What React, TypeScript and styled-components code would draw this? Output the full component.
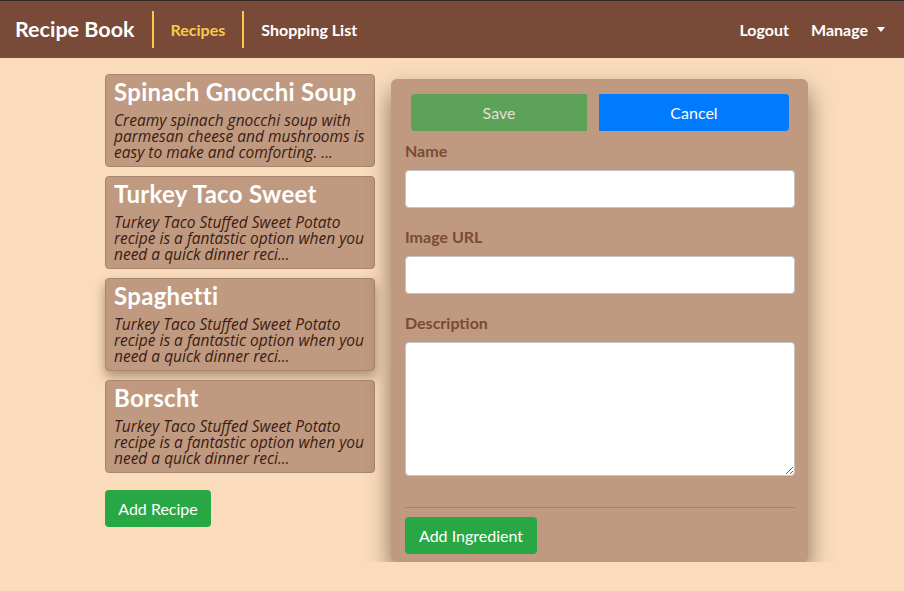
import styled, { createGlobalStyle } from 'styled-components';

const GlobalStyle = createGlobalStyle`
  html, body {
    margin: 0;
    padding: 0;
    background: #fadcbd;
    font-family: Lato, 'Noto Sans', sans-serif;
  }
  * {
    box-sizing: border-box;
  }
`;

const Navbar = styled.nav`
  display: flex;
  align-items: center;
  height: 58px;
  padding: 0 19px 0 15px;
  background: #794a38;
  border-top: 1px solid #2e2a28;
`;

const Brand = styled.span`
  color: #fff;
  font-size: 21.5px;
  font-weight: 700;
  padding-right: 17px;
  border-right: 2px solid #f7ca4a;
  line-height: 37px;
`;

interface NavLinkProps {
  $active?: boolean;
  $divider?: boolean;
}

const NavLink = styled.span<NavLinkProps>`
  color: ${(p) => (p.$active ? '#f7ca4a' : '#fff')};
  font-size: 16px;
  font-weight: 700;
  line-height: 37px;
  padding: 0 17px;
  border-right: ${(p) => (p.$divider ? '2px solid #f7ca4a' : 'none')};
`;

const NavSpacer = styled.div`
  flex: 1;
`;

const RightLink = styled.span`
  color: #fff;
  font-size: 16px;
  font-weight: 700;
  margin-left: 22px;
  display: flex;
  align-items: center;
`;

const Caret = styled.span`
  display: inline-block;
  margin-left: 9px;
  border-top: 5px solid #fff;
  border-left: 4px solid transparent;
  border-right: 4px solid transparent;
`;

const Page = styled.main`
  display: flex;
  align-items: flex-start;
  gap: 16px;
  padding: 16px 0 0 105px;
`;

const RecipeColumn = styled.div`
  width: 270px;
  display: flex;
  flex-direction: column;
  gap: 9px;
`;

const RecipeCard = styled.div<{ $raised?: boolean }>`
  background: #bf9a80;
  border: 1px solid #a8856e;
  border-radius: 4px;
  padding: 2px 6px 6px 8px;
  box-shadow: ${(p) => (p.$raised ? '0 6px 12px rgba(60, 30, 10, 0.4)' : 'none')};
`;

const RecipeTitle = styled.h4`
  margin: 0 0 5px 0;
  color: #fff;
  font-size: 24px;
  font-weight: 700;
  letter-spacing: 0.3px;
  line-height: 30px;
  white-space: nowrap;
`;

const RecipeText = styled.p`
  margin: 0;
  color: #3d1a12;
  font-family: 'Open Sans', sans-serif;
  font-size: 15.5px;
  font-style: italic;
  line-height: 16px;
`;

const Button = styled.button<{ $color: string }>`
  font-family: inherit;
  font-size: 16px;
  color: #fff;
  background: ${(p) => p.$color};
  border: none;
  border-radius: 4px;
  height: 37px;
  padding: 0 13px;
  cursor: pointer;
`;

const AddRecipe = styled(Button)`
  align-self: flex-start;
  margin-top: 8px;
  width: 106px;
`;

const AddIngredient = styled(Button)`
  width: 132px;
`;

const EditPanel = styled.div`
  width: 417px;
  margin-top: 5px;
  background: #bf9a80;
  border-radius: 6px;
  padding: 15px 13px 8px 14px;
  box-shadow: 0 12px 24px rgba(40, 20, 5, 0.55);
`;

const ActionRow = styled.div`
  display: grid;
  grid-template-columns: 176px 190px;
  gap: 12px;
  margin-left: 6px;
  margin-bottom: 8px;
`;

const SaveButton = styled(Button)`
  opacity: 0.65;
  border-radius: 4px 0 0 4px;
`;

const CancelButton = styled(Button)`
  border-radius: 0 4px 4px 0;
`;

const FormGroup = styled.div`
  display: flex;
  flex-direction: column;
  margin-bottom: 17px;
`;

const Label = styled.label`
  color: #7a4a38;
  font-size: 16px;
  font-weight: 700;
  line-height: 23px;
  margin-bottom: 8px;
`;

const Input = styled.input`
  height: 38px;
  border: 1px solid #c8c4c4;
  border-radius: 4px;
  background: #fff;
  font-family: inherit;
`;

const TextArea = styled.textarea`
  height: 134px;
  border: 1px solid #c8c4c4;
  border-radius: 4px;
  background: #fff;
  font-family: inherit;
`;

const Divider = styled.hr`
  margin: 31px 0 9px 0;
  border: none;
  border-top: 1px solid #a6836d;
`;

const recipes = [
  {
    name: 'Spinach Gnocchi Soup',
    text: 'Creamy spinach gnocchi soup with parmesan cheese and mushrooms is easy to make and comforting. ...',
  },
  {
    name: 'Turkey Taco Sweet',
    text: 'Turkey Taco Stuffed Sweet Potato recipe is a fantastic option when you need a quick dinner reci...',
  },
  {
    name: 'Spaghetti',
    text: 'Turkey Taco Stuffed Sweet Potato recipe is a fantastic option when you need a quick dinner reci...',
  },
  {
    name: 'Borscht',
    text: 'Turkey Taco Stuffed Sweet Potato recipe is a fantastic option when you need a quick dinner reci...',
  },
];

const App = () => {
  return (
    <>
      <GlobalStyle />
      <Navbar>
        <Brand>Recipe Book</Brand>
        <NavLink $active $divider>
          Recipes
        </NavLink>
        <NavLink>Shopping List</NavLink>
        <NavSpacer />
        <RightLink>Logout</RightLink>
        <RightLink>
          Manage
          <Caret />
        </RightLink>
      </Navbar>
      <Page>
        <RecipeColumn>
          {recipes.map((recipe, i) => (
            <RecipeCard key={recipe.name} $raised={i === 2}>
              <RecipeTitle>{recipe.name}</RecipeTitle>
              <RecipeText>{recipe.text}</RecipeText>
            </RecipeCard>
          ))}
          <AddRecipe $color="#28a745">Add Recipe</AddRecipe>
        </RecipeColumn>
        <EditPanel>
          <ActionRow>
            <SaveButton $color="#28a745" disabled>
              Save
            </SaveButton>
            <CancelButton $color="#007bff">Cancel</CancelButton>
          </ActionRow>
          <FormGroup>
            <Label>Name</Label>
            <Input type="text" />
          </FormGroup>
          <FormGroup>
            <Label>Image URL</Label>
            <Input type="text" />
          </FormGroup>
          <FormGroup>
            <Label>Description</Label>
            <TextArea />
          </FormGroup>
          <Divider />
          <AddIngredient $color="#28a745">Add Ingredient</AddIngredient>
        </EditPanel>
      </Page>
    </>
  );
};

export default App;
